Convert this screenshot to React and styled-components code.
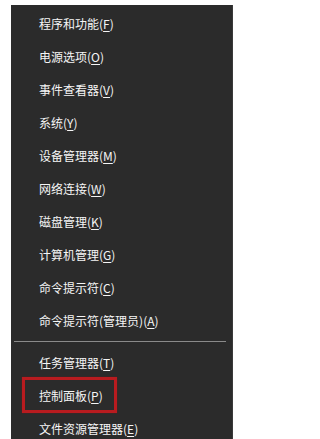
import styled, { createGlobalStyle } from "styled-components";

const GlobalStyle = createGlobalStyle`
  html, body {
    margin: 0;
    padding: 0;
    background: #fff;
    overflow: hidden;
  }
`;

const Page = styled.div`
  width: 242px;
  height: 439px;
  padding: 5px 0 0 11px;
  box-sizing: border-box;
`;

const Menu = styled.div`
  width: 222px;
  height: 440px;
  background: #2b2b2b;
  padding-top: 2px;
  box-sizing: border-box;
  font-family: "Noto Sans CJK SC", "Noto Sans", sans-serif;
  font-size: 12px;
  color: #f5f5f5;
  border-right: 1px solid #3a3a3a;
`;

const Item = styled.div`
  position: relative;
  height: 33px;
  display: flex;
  align-items: center;
  padding-left: 28px;
  white-space: nowrap;
`;

const Key = styled.span`
  text-decoration: underline;
  text-underline-offset: 2px;
`;

const Divider = styled.div`
  height: 1px;
  margin: 4px 6px 4px 3px;
  background: #8a8a8a;
`;

const Highlight = styled.div`
  position: absolute;
  left: 11px;
  top: -2px;
  width: 95px;
  height: 36px;
  border: 3px solid #b81b1f;
  box-shadow: 0 0 1px #7a1a1a;
  box-sizing: border-box;
  pointer-events: none;
`;

const top = [
  ["程序和功能", "F"],
  ["电源选项", "O"],
  ["事件查看器", "V"],
  ["系统", "Y"],
  ["设备管理器", "M"],
  ["网络连接", "W"],
  ["磁盘管理", "K"],
  ["计算机管理", "G"],
  ["命令提示符", "C"],
  ["命令提示符(管理员)", "A"],
];

const bottom = [
  ["任务管理器", "T"],
  ["控制面板", "P", true],
  ["文件资源管理器", "E"],
];

const Row = ({ label, k, marked }) => (
  <Item>
    {label}(<Key>{k}</Key>)
    {marked && <Highlight />}
  </Item>
);

export default function App() {
  return (
    <>
      <GlobalStyle />
      <Page>
        <Menu>
          {top.map(([label, k]) => (
            <Row key={label} label={label} k={k} />
          ))}
          <Divider />
          {bottom.map(([label, k, marked]) => (
            <Row key={label} label={label} k={k} marked={marked} />
          ))}
        </Menu>
      </Page>
    </>
  );
}
